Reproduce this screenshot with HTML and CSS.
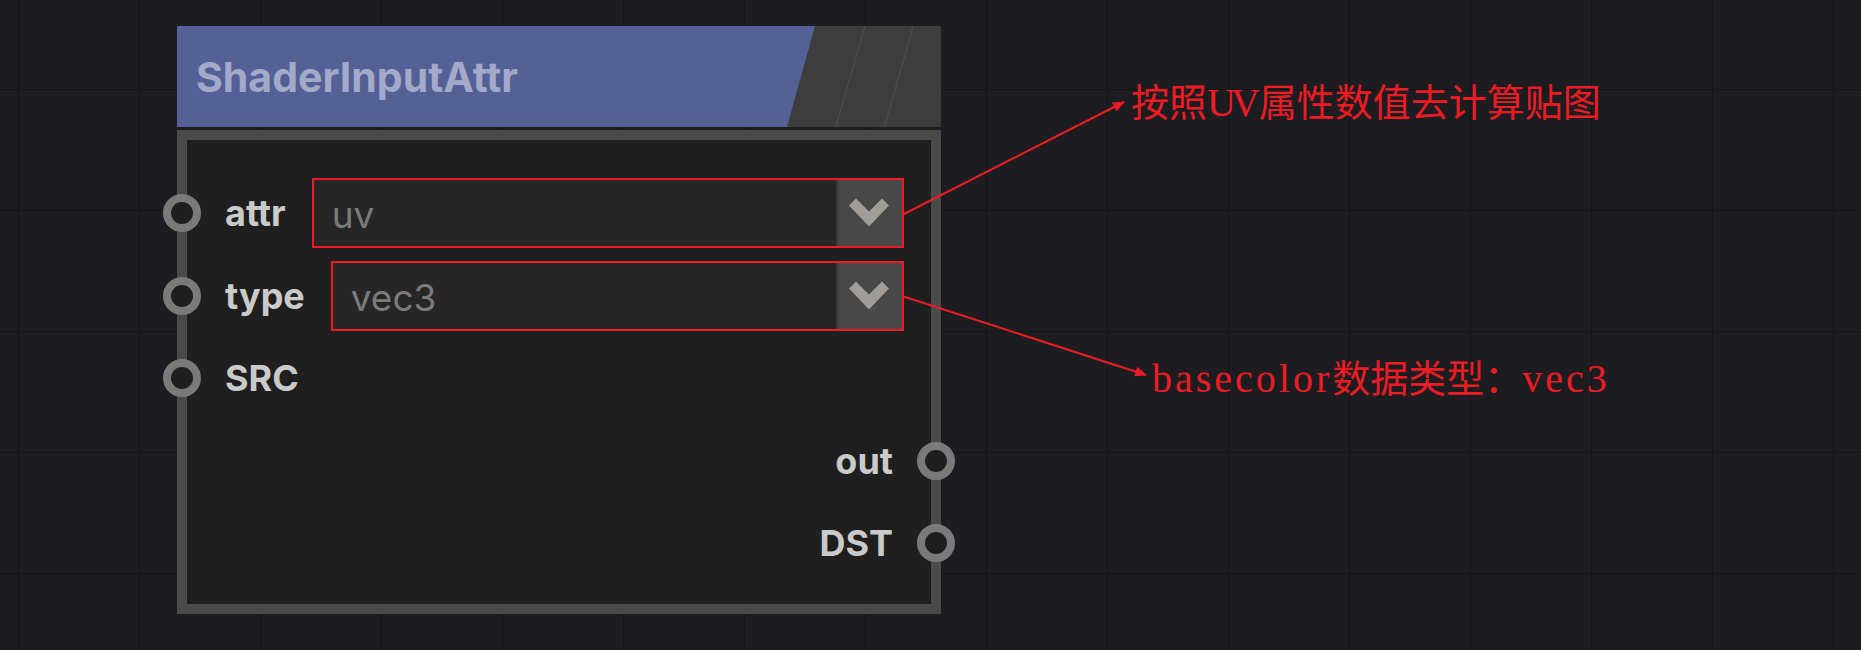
FILE: index.html
```html
<!DOCTYPE html>
<html lang="zh-CN">
<head>
    <meta charset="UTF-8">
    <title>ShaderInputAttr</title>
    <link rel="stylesheet" href="styles.css">
</head>
<body>

    <!-- Node Graph Canvas -->
    <div class="canvas">

        <!-- Node -->
        <div class="node">
            <div class="node-header">
                <div class="node-title">ShaderInputAttr</div>
                <div class="node-stripes">
                    <svg width="126" height="101" viewBox="0 0 126 101">
                        <line x1="50" y1="0" x2="20.7" y2="101" />
                        <line x1="98.3" y1="0" x2="69.3" y2="101" />
                    </svg>
                </div>
            </div>

            <div class="node-body">
                <div class="row row-in">
                    <span class="port"></span>
                    <span class="label">attr</span>
                    <div class="select marked">
                        <span class="select-value">uv</span>
                        <span class="select-btn">
                            <svg width="66" height="66" viewBox="0 0 66 66"><polygon points="13,25.5 20,18.5 33,31.5 46,18.5 53,25.5 33,46.5" /></svg>
                        </span>
                    </div>
                </div>
                <div class="row row-in">
                    <span class="port"></span>
                    <span class="label">type</span>
                    <div class="select marked">
                        <span class="select-value">vec3</span>
                        <span class="select-btn">
                            <svg width="66" height="66" viewBox="0 0 66 66"><polygon points="13,25.5 20,18.5 33,31.5 46,18.5 53,25.5 33,46.5" /></svg>
                        </span>
                    </div>
                </div>
                <div class="row row-in">
                    <span class="port"></span>
                    <span class="label">SRC</span>
                </div>
                <div class="row row-out">
                    <span class="label">out</span>
                    <span class="port"></span>
                </div>
                <div class="row row-out">
                    <span class="label">DST</span>
                    <span class="port"></span>
                </div>
            </div>
        </div>

        <!-- Annotations -->
        <svg class="arrows" width="1861" height="650" viewBox="0 0 1861 650">
            <defs>
                <marker id="head" markerWidth="12" markerHeight="10" refX="11" refY="5" orient="auto" markerUnits="userSpaceOnUse">
                    <polygon points="0,0 12,5 0,10" fill="#ed1c24" />
                </marker>
            </defs>
            <line x1="904" y1="214" x2="1124" y2="102" marker-end="url(#head)" />
            <line x1="902" y1="296" x2="1146" y2="375" marker-end="url(#head)" />
        </svg>

        <div class="note note-1">按照<span class="latin caps">UV</span>属性数值去计算贴图</div>
        <div class="note note-2"><span class="latin">basecolor</span>数据类型：<span class="latin">vec3</span></div>
    </div>

</body>
</html>
```

FILE: styles.css
```css
/* General Styling */
body {
    margin: 0;
    padding: 0;
    background: #1d1d21;
    font-family: 'Inter', 'Noto Sans', sans-serif;
}

/* Canvas with grid */
.canvas {
    position: relative;
    width: 1861px;
    height: 650px;
    overflow: hidden;
    background-color: #1d1d21;
    background-image:
        linear-gradient(to right, #141417 1px, transparent 1px),
        linear-gradient(to bottom, #141417 1px, transparent 1px);
    background-size: 121px 121px;
    background-position: 18px 89px;
}

/* Node */
.node {
    position: absolute;
    left: 177px;
    top: 26px;
    width: 764px;
    display: flex;
    flex-direction: column;
    gap: 3px;
}

.node-header {
    height: 101px;
    display: flex;
    background: #3d3d3d;
}

.node-title {
    width: 638px;
    display: flex;
    align-items: center;
    padding-left: 19px;
    box-sizing: border-box;
    background: #536196;
    clip-path: polygon(0 0, 100% 0, calc(100% - 28px) 100%, 0 100%);
    color: #a3a9c9;
    font-size: 41px;
    font-weight: 700;
}

.node-stripes {
    flex: 1;
    display: flex;
}

.node-stripes line {
    stroke: #4a4a4a;
    stroke-width: 1.5;
}

.node-body {
    height: 483.5px;
    box-sizing: border-box;
    border: 10px solid #4a4a4a;
    background: #1f1f1f;
    padding: 32px 0 19px 0;
}

/* Rows */
.row {
    height: 82.5px;
    display: flex;
    align-items: center;
}

.row-out {
    justify-content: flex-end;
}

.port {
    width: 38px;
    height: 38px;
    box-sizing: border-box;
    border: 8px solid #7a7a7a;
    border-radius: 50%;
    background: #1f1f1f;
    flex-shrink: 0;
}

.row-in .port {
    margin-left: -24px;
    margin-right: 24px;
}

.row-out .port {
    margin-left: 24px;
    margin-right: -24px;
}

.label {
    color: #cacaca;
    font-size: 36px;
    font-weight: 700;
}

/* Select */
.select {
    flex: 1;
    height: 66px;
    margin-left: 28px;
    margin-right: 29px;
    display: flex;
    align-items: center;
    background: #262626;
}

.marked {
    outline: 2px solid #ed1c24;
}

.select-value {
    flex: 1;
    padding-left: 18px;
    padding-top: 3px;
    color: #7b7b7b;
    font-size: 37px;
}

.select-btn {
    width: 66px;
    height: 66px;
    box-sizing: border-box;
    border-left: 2px solid #3a3a3a;
    background: #484848;
    display: flex;
    justify-content: center;
}

.select-btn svg {
    margin-left: -2px;
}

.select-btn polygon {
    fill: #a09d99;
}

/* Annotations */
.arrows {
    position: absolute;
    left: 0;
    top: 0;
    pointer-events: none;
}

.arrows line {
    stroke: #ed1c24;
    stroke-width: 2;
}

.note {
    position: absolute;
    color: #ed1c24;
    font-family: 'Noto Sans CJK SC', sans-serif;
    font-size: 38px;
    line-height: 1;
    white-space: nowrap;
}

.note .latin {
    font-family: 'Liberation Serif', serif;
    font-size: 40px;
    letter-spacing: 3px;
}

.note .caps {
    letter-spacing: -5px;
    padding-right: 4px;
}

.note-1 {
    left: 1131px;
    top: 81px;
}

.note-2 {
    left: 1152px;
    top: 357px;
}
```
